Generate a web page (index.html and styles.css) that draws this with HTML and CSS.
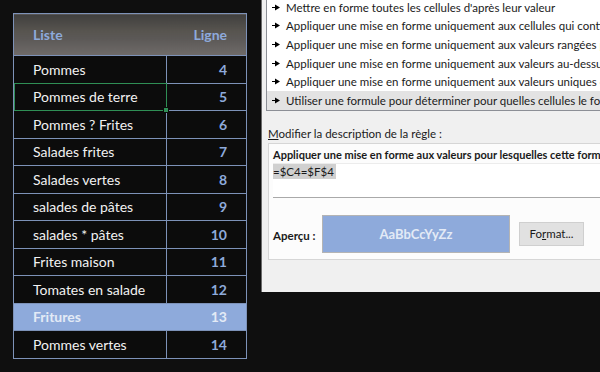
FILE: index.html
```html
<!DOCTYPE html>
<html lang="fr">
<head>
    <meta charset="UTF-8">
    <title>Mise en forme conditionnelle</title>
    <link rel="stylesheet" href="styles.css">
</head>
<body>
    <div class="page">
        <div class="sheet">
            <table class="liste">
                <thead>
                    <tr>
                        <th class="col-nom">Liste</th>
                        <th class="col-num">Ligne</th>
                    </tr>
                </thead>
                <tbody>
                    <tr><td class="col-nom">Pommes</td><td class="col-num">4</td></tr>
                    <tr><td class="col-nom active">Pommes de terre<span class="handle"></span></td><td class="col-num">5</td></tr>
                    <tr><td class="col-nom">Pommes ? Frites</td><td class="col-num">6</td></tr>
                    <tr><td class="col-nom">Salades frites</td><td class="col-num">7</td></tr>
                    <tr><td class="col-nom">Salades vertes</td><td class="col-num">8</td></tr>
                    <tr><td class="col-nom">salades de pâtes</td><td class="col-num">9</td></tr>
                    <tr><td class="col-nom">salades * pâtes</td><td class="col-num">10</td></tr>
                    <tr><td class="col-nom">Frites maison</td><td class="col-num">11</td></tr>
                    <tr><td class="col-nom">Tomates en salade</td><td class="col-num">12</td></tr>
                    <tr class="match"><td class="col-nom">Fritures</td><td class="col-num">13</td></tr>
                    <tr><td class="col-nom">Pommes vertes</td><td class="col-num">14</td></tr>
                </tbody>
            </table>
        </div>

        <div class="dialog">
            <ul class="rule-types">
                <li><svg class="arrow" width="8" height="7" viewBox="0 0 8 7"><path d="M0 3h3V0.5L8 3.5 3 6.5V4H0z"/></svg>Mettre en forme toutes les cellules d'après leur valeur</li>
                <li><svg class="arrow" width="8" height="7" viewBox="0 0 8 7"><path d="M0 3h3V0.5L8 3.5 3 6.5V4H0z"/></svg>Appliquer une mise en forme uniquement aux cellules qui contiennent</li>
                <li><svg class="arrow" width="8" height="7" viewBox="0 0 8 7"><path d="M0 3h3V0.5L8 3.5 3 6.5V4H0z"/></svg>Appliquer une mise en forme uniquement aux valeurs rangées parmi les premières ou les dernières valeurs</li>
                <li><svg class="arrow" width="8" height="7" viewBox="0 0 8 7"><path d="M0 3h3V0.5L8 3.5 3 6.5V4H0z"/></svg>Appliquer une mise en forme uniquement aux valeurs au-dessus ou en dessous de la moyenne</li>
                <li><svg class="arrow" width="8" height="7" viewBox="0 0 8 7"><path d="M0 3h3V0.5L8 3.5 3 6.5V4H0z"/></svg>Appliquer une mise en forme uniquement aux valeurs uniques ou en double</li>
                <li class="selected"><svg class="arrow" width="8" height="7" viewBox="0 0 8 7"><path d="M0 3h3V0.5L8 3.5 3 6.5V4H0z"/></svg>Utiliser une formule pour déterminer pour quelles cellules le format sera appliqué</li>
            </ul>

            <p class="section-label"><u>M</u>odifier la description de la règle :</p>

            <div class="rule-box">
                <p class="rule-title">Appliquer une mise en forme aux valeurs pour lesquelles cette formule est vraie :</p>
                <div class="formula"><span class="formula-text">=$C4=$F$4</span></div>

                <div class="preview-row">
                    <span class="preview-label">Aperçu :</span>
                    <div class="preview">AaBbCcYyZz</div>
                    <button class="btn">Fo<u>r</u>mat...</button>
                </div>
            </div>
        </div>
    </div>
</body>
</html>
```

FILE: styles.css
```css
:root {
    --bg: #0f0f0f;
    --grid: #7d92b8;
    --accent: #8eaadb;
    --accent-text: #e3eaf6;
    --cell-text: #f2f2f2;
    --dialog: #f0f0f0;
    --text: #1a1a1a;
}

html, body {
    margin: 0;
    height: 100%;
}

body {
    background: var(--bg);
    overflow: hidden;
}

.page {
    display: flex;
    align-items: flex-start;
}

/* --- feuille Excel --- */

.sheet {
    padding: 13px 0 0 13px;
}

.liste {
    border-collapse: collapse;
    width: 234px;
    font-family: "Lato", "Open Sans", sans-serif;
    font-size: 14px;
    color: var(--cell-text);
    border: 1px solid var(--grid);
}

.liste th {
    height: 41px;
    padding: 0 19px;
    color: var(--accent);
    font-weight: 700;
    background: linear-gradient(#403f3e, #57544f 40%, #5c5957 60%, #6f6b69);
    border-bottom: 1px solid var(--grid);
}

.liste td {
    height: 26.5px;
    padding: 0 19px;
    border: 1px solid var(--grid);
    background: #0c0c0c;
}

.liste .col-nom {
    text-align: left;
    width: 114px;
}

.liste .col-num {
    text-align: right;
    color: var(--accent);
    font-weight: 700;
}

.liste td.active {
    position: relative;
    outline: 1px solid #2f8f55;
    outline-offset: -1px;
}

.handle {
    position: absolute;
    right: -3px;
    bottom: -3px;
    width: 4px;
    height: 4px;
    background: #2f8f55;
    border: 1px solid #0c0c0c;
}

.liste tr.match td {
    background: var(--accent);
    color: var(--accent-text);
    font-weight: 700;
    border-left-color: var(--accent);
    border-right-color: var(--accent);
}

.liste tr.match td.col-nom {
    border-left-color: var(--grid);
}

.liste tr.match td.col-num {
    border-right-color: var(--grid);
}

/* --- boîte de dialogue --- */

.dialog {
    margin-left: 14px;
    flex: 1;
    height: 292px;
    background: var(--dialog);
    border-left: 1px solid #6b6b6b;
    font-family: "Lato", "Open Sans", sans-serif;
    font-size: 11.5px;
    color: var(--text);
    overflow: hidden;
    white-space: nowrap;
}

.rule-types {
    list-style: none;
    margin: -3px 0 0 4px;
    padding: 0;
    background: #fff;
    border: 1px solid #8c8f96;
    border-right: none;
}

.rule-types li {
    display: flex;
    align-items: center;
    height: 18.6px;
    padding-left: 5px;
}

.rule-types li.selected {
    background: #e3e3e3;
}

.arrow {
    margin-right: 6px;
    flex-shrink: 0;
}

.section-label {
    margin: 15px 0 0 6px;
    line-height: 16px;
}

.rule-box {
    margin: 1px 0 0 6px;
    height: 113px;
    background: #fcfcfc;
    border: 1px solid #d6d6d6;
    border-right: none;
    padding: 2px 0 0 4px;
}

.rule-title {
    margin: 0;
    font-weight: 700;
    font-size: 11px;
    line-height: 17px;
}

.formula {
    height: 33px;
    border-bottom: 1px solid #a9a9a9;
    border-top: 1px solid #ececec;
    background: #fff;
}

.formula-text {
    background: #d0d0d0;
    padding: 1px 2px 1px 0;
    line-height: 16px;
}

.preview-row {
    display: flex;
    align-items: center;
    margin-top: 17px;
}

.preview-label {
    font-weight: 700;
    width: 49px;
    padding-top: 3px;
}

.preview {
    width: 186px;
    height: 36px;
    border: 1px solid #b4b4b4;
    background: var(--accent);
    color: var(--accent-text);
    font-weight: 700;
    font-size: 13px;
    display: flex;
    align-items: center;
    justify-content: center;
}

.btn {
    margin-left: 9px;
    width: 65px;
    height: 24px;
    background: #e1e1e1;
    border: 1px solid #cfcfcf;
    font-family: inherit;
    font-size: 11.5px;
    color: var(--text);
    padding: 0;
}
```
